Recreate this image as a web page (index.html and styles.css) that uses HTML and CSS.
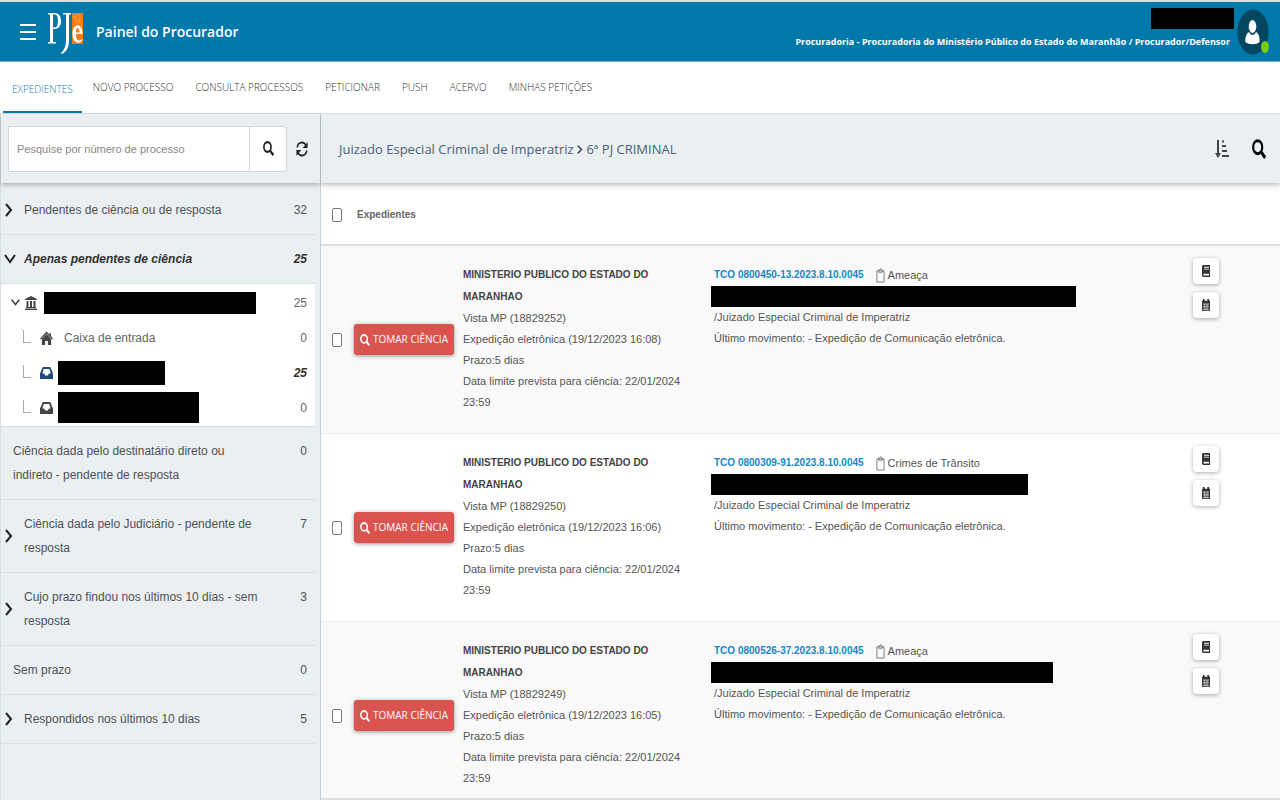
FILE: index.html
```html
<!DOCTYPE html>
<html lang="pt-BR">
<head>
<meta charset="utf-8">
<title>Painel do Procurador</title>
<link rel="stylesheet" href="styles.css">
</head>
<body>
<svg class="defs" aria-hidden="true">
  <symbol id="search" viewBox="0 0 16 16" preserveAspectRatio="none"><circle cx="6.500" cy="6.500" r="5.200" fill="none" stroke="currentColor" stroke-width="2.400"/><path d="M10 10l5 5" stroke="currentColor" stroke-width="3"/></symbol>
  <symbol id="right" viewBox="0 0 8 14" preserveAspectRatio="none"><path d="M1 1l5 6-5 6" fill="none" stroke="currentColor" stroke-width="2"/></symbol>
  <symbol id="down" viewBox="0 0 12 10" preserveAspectRatio="none"><path d="M1 1l5 7 5-7" fill="none" stroke="currentColor" stroke-width="2"/></symbol>
  <symbol id="inbox" viewBox="0 0 14 14" preserveAspectRatio="none"><path fill="currentColor" fill-rule="evenodd" d="M3 1h8l3 6.500V13H0V7.500zM4 3L2.500 7.500h2L5.500 9.500h3l1-2h2L10 3z"/></symbol>
  <symbol id="clip" viewBox="0 0 10 16" preserveAspectRatio="none"><path d="M1 3h8v12H1z" fill="none" stroke="currentColor"/><path d="M3 2h1l1-1.500L6 2h1v2.500H3z" fill="none" stroke="currentColor"/></symbol>
  <symbol id="book" viewBox="0 0 8 13" preserveAspectRatio="none"><path fill="currentColor" fill-rule="evenodd" d="M1 0h7v13H1L0 12V1zM2 2v1h5V2zM2 4v1h5V4zM1.500 9.500v2H7v-2z"/></symbol>
  <symbol id="cal" viewBox="0 0 9 13" preserveAspectRatio="none"><path fill="currentColor" d="M1 0h2v2h3V0h2v2h1v11H0V2h1z"/><path d="M1 5.500h7M1 8.500h7M1 11.500h7M2.500 5v7.500M4.500 5v7.500M6.500 5v7.500" stroke="#fff" stroke-width=".6"/></symbol>
</svg>
<header class="topbar">
  <button class="menu" aria-label="Menu"><span></span><span></span><span></span></button>
  <svg class="logo" viewBox="0 0 35 42" role="img" aria-label="PJe">
    <rect x="24" y="1" width="11" height="31" fill="#f57c13"/>
    <path d="M25 5h3V3h4v6h-5M28 5v6h6" fill="none" stroke="#ffae61" stroke-width=".6"/>
    <path d="M0 1h7c8 0 8 16 0 16H5v13h3v1.500H0V30h2V2.500H0zM5 2.500v13h2c4 0 4-13 0-13zM15 1h8v1.500h-2V28c0 8-3 12-7 14l-1-1c3-3 5-6 5-13V2.500h-3z" fill="#fff" fill-rule="evenodd"/>
    <path d="M34.500 28c-3 5-10 3-10-6 0-11 10-12 10 0h-6.500c0 8 4 7 6.500 5zm-3-7.500c0-6-3.500-6-3.500 0z" fill="#fff" fill-rule="evenodd"/>
  </svg>
  <h1>Painel do Procurador</h1>
  <div class="user">
    <span class="redact name"></span>
    <span>Procuradoria - Procuradoria do Ministério Público do Estado do Maranhão / Procurador/Defensor</span>
  </div>
  <button class="avatar" aria-label="Usuário">
    <svg viewBox="0 0 32 46" preserveAspectRatio="none"><ellipse cx="16" cy="23" rx="15.500" ry="22.500" fill="#04465f"/><ellipse cx="15.500" cy="17.500" rx="3.800" ry="6.500" fill="#fff"/><path d="M12 23c2 4 5 4 7 0 3 2 4 6 3.500 10-3 3-11 3-14 0-.5-4 .5-8 3.500-10z" fill="#fff"/><ellipse cx="28" cy="38" rx="4" ry="6" fill="#78cd0a"/></svg>
  </button>
</header>
<nav class="tabs">
  <a href="#" class="active">EXPEDIENTES</a><a href="#">NOVO PROCESSO</a><a href="#">CONSULTA PROCESSOS</a><a href="#">PETICIONAR</a><a href="#">PUSH</a><a href="#">ACERVO</a><a href="#">MINHAS PETIÇÕES</a>
</nav>
<div class="layout">
  <aside>
    <form class="search">
      <input type="text" placeholder="Pesquise por número de processo" aria-label="Pesquise por número de processo">
      <button type="button" class="go" aria-label="Pesquisar"><svg class="i-search"><use href="#search"/></svg></button>
      <button type="button" class="refresh" aria-label="Atualizar"><svg viewBox="0 0 14 16" preserveAspectRatio="none"><path d="M1.500 6.500C2 1 9 0 11.500 4M12.500 9.500C12 15 5 16 2.500 12" fill="none" stroke="currentColor" stroke-width="1.800"/><path d="M13.500 1v6H8zM.5 15V9H6z" fill="currentColor"/></svg></button>
    </form>
    <ul class="groups">
      <li><a href="#"><svg class="i-right"><use href="#right"/></svg><span>Pendentes de ciência ou de resposta</span><b>32</b></a></li>
      <li class="open"><a href="#"><svg class="i-down"><use href="#down"/></svg><span>Apenas pendentes de ciência</span><b>25</b></a></li>
      <li class="tree">
        <ul>
          <li><svg class="i-small"><use href="#down"/></svg><svg class="bank" viewBox="0 0 12 14" preserveAspectRatio="none"><path fill="currentColor" d="M6 0l6 3v1H0V3zM1.500 5h2v6h-2zM5 5h2v6H5zM8.500 5h2v6h-2zM1 11h10v1H1zM0 12.500h12V14H0z"/></svg><span class="redact r1"></span><b>25</b></li>
          <li class="child"><i></i><svg class="tray" viewBox="0 0 14 14" preserveAspectRatio="none"><path fill="currentColor" d="M7 3l5 5v6H8.500v-4h-3v4H2V8z"/><path d="M.5 8L7 1.500 13.500 8M11 2v3" fill="none" stroke="currentColor" stroke-width="1.500"/></svg><a href="#">Caixa de entrada</a><b>0</b></li>
          <li class="child current"><i></i><svg class="tray"><use href="#inbox"/></svg><span class="redact r2"></span><b>25</b></li>
          <li class="child"><i></i><svg class="tray"><use href="#inbox"/></svg><span class="redact r3"></span><b>0</b></li>
        </ul>
      </li>
      <li class="plain"><a href="#"><span>Ciência dada pelo destinatário direto ou indireto - pendente de resposta</span><b>0</b></a></li>
      <li><a href="#"><svg class="i-right"><use href="#right"/></svg><span>Ciência dada pelo Judiciário - pendente de resposta</span><b>7</b></a></li>
      <li><a href="#"><svg class="i-right"><use href="#right"/></svg><span>Cujo prazo findou nos últimos 10 dias - sem resposta</span><b>3</b></a></li>
      <li class="plain"><a href="#"><span>Sem prazo</span><b>0</b></a></li>
      <li><a href="#"><svg class="i-right"><use href="#right"/></svg><span>Respondidos nos últimos 10 dias</span><b>5</b></a></li>
    </ul>
  </aside>
  <main>
    <div class="crumbs">
      <h2>Juizado Especial Criminal de Imperatriz <svg><use href="#right"/></svg> 6ª PJ CRIMINAL</h2>
      <button aria-label="Ordenar"><svg class="sort" viewBox="0 0 14 18" preserveAspectRatio="none"><path d="M3 0v15M7 1.500h2M7 6h4M7 11h5M7 16h7" fill="none" stroke="#444" stroke-width="2"/><path d="M0 13h6l-3 5z" fill="#444"/></svg></button>
      <button aria-label="Pesquisar"><svg class="find"><use href="#search"/></svg></button>
    </div>
    <table>
      <colgroup><col class="w-check"><col class="w-action"><col class="w-who"><col><col class="w-tools"></colgroup>
      <thead><tr><th class="check"><input type="checkbox" id="all"></th><th colspan="4"><label for="all">Expedientes</label></th></tr></thead>
      <tbody>
        <tr>
          <td class="check"><input type="checkbox" aria-label="Selecionar 18829252"></td>
          <td class="action"><button class="take"><svg><use href="#search"/></svg>TOMAR CIÊNCIA</button></td>
          <td class="who"><strong>MINISTERIO PUBLICO DO ESTADO DO MARANHAO</strong><div>Vista MP (18829252)</div><div>Expedição eletrônica (19/12/2023 16:08)</div><div>Prazo:5 dias</div><div>Data limite prevista para ciência: 22/01/2024 23:59</div></td>
          <td class="case"><div class="head"><a href="#">TCO 0800450-13.2023.8.10.0045</a><svg><use href="#clip"/></svg>Ameaça</div><span class="redact c1"></span><div>/Juizado Especial Criminal de Imperatriz</div><div>Último movimento: - Expedição de Comunicação eletrônica.</div></td>
          <td class="tools"><button aria-label="Autos"><svg><use href="#book"/></svg></button><button aria-label="Prazo"><svg><use href="#cal"/></svg></button></td>
        </tr>
        <tr>
          <td class="check"><input type="checkbox" aria-label="Selecionar 18829250"></td>
          <td class="action"><button class="take"><svg><use href="#search"/></svg>TOMAR CIÊNCIA</button></td>
          <td class="who"><strong>MINISTERIO PUBLICO DO ESTADO DO MARANHAO</strong><div>Vista MP (18829250)</div><div>Expedição eletrônica (19/12/2023 16:06)</div><div>Prazo:5 dias</div><div>Data limite prevista para ciência: 22/01/2024 23:59</div></td>
          <td class="case"><div class="head"><a href="#">TCO 0800309-91.2023.8.10.0045</a><svg><use href="#clip"/></svg>Crimes de Trânsito</div><span class="redact c2"></span><div>/Juizado Especial Criminal de Imperatriz</div><div>Último movimento: - Expedição de Comunicação eletrônica.</div></td>
          <td class="tools"><button aria-label="Autos"><svg><use href="#book"/></svg></button><button aria-label="Prazo"><svg><use href="#cal"/></svg></button></td>
        </tr>
        <tr>
          <td class="check"><input type="checkbox" aria-label="Selecionar 18829249"></td>
          <td class="action"><button class="take"><svg><use href="#search"/></svg>TOMAR CIÊNCIA</button></td>
          <td class="who"><strong>MINISTERIO PUBLICO DO ESTADO DO MARANHAO</strong><div>Vista MP (18829249)</div><div>Expedição eletrônica (19/12/2023 16:05)</div><div>Prazo:5 dias</div><div>Data limite prevista para ciência: 22/01/2024 23:59</div></td>
          <td class="case"><div class="head"><a href="#">TCO 0800526-37.2023.8.10.0045</a><svg><use href="#clip"/></svg>Ameaça</div><span class="redact c3"></span><div>/Juizado Especial Criminal de Imperatriz</div><div>Último movimento: - Expedição de Comunicação eletrônica.</div></td>
          <td class="tools"><button aria-label="Autos"><svg><use href="#book"/></svg></button><button aria-label="Prazo"><svg><use href="#cal"/></svg></button></td>
        </tr>
      </tbody>
    </table>
  </main>
</div>
</body>
</html>
```
FILE: styles.css
```css
* { box-sizing: border-box; }
body { margin: 0; height: 100vh; display: flex; flex-direction: column; overflow: hidden; border-top: 2px solid #dce0e2; color: #555; background: #fff; font-family: "Liberation Sans", Arial, sans-serif; font-size: 11px; }
button { padding: 0; border: 0; background: none; color: inherit; font: inherit; cursor: pointer; }
a { color: inherit; text-decoration: none; }
ul { margin: 0; padding: 0; list-style: none; }
svg { flex: none; display: block; }
.defs { position: absolute; width: 0; height: 0; }
.redact { display: block; background: #000; }

.topbar { flex: none; height: 60px; display: flex; align-items: center; padding: 0 11px 0 20px; background: #0078aa; border-bottom: 1px solid #7da7c6; color: #fff; font-family: "Open Sans", sans-serif; }
.menu { width: 16px; display: grid; gap: 5px; }
.menu span { height: 2px; background: #fff; }
.logo { width: 35px; height: 42px; margin: 2px 13px 0 12px; }
h1 { margin: 0; font-size: 14px; font-weight: 600; }
.user { flex: 1; display: flex; flex-direction: column; align-items: flex-end; gap: 3px; padding-bottom: 3px; font-size: 9px; font-weight: 700; line-height: 20px; white-space: nowrap; }
.name { width: 83px; height: 21px; margin-right: -4px; }
.avatar { width: 32px; height: 46px; margin-left: 7px; padding-bottom: 2px; }
.avatar svg { width: 32px; height: 46px; }

.tabs { flex: none; height: 52px; display: flex; padding-left: 3px; border-bottom: 1px solid #dcdfe0; font-family: "Open Sans", sans-serif; font-size: 10px; font-weight: 300; color: #333; line-height: 50px; white-space: nowrap; }
.tabs a { padding: 0 11px; }
.tabs .active { padding: 2px 9px 0; color: #1b7fb1; border-bottom: 2px solid #0f7aa6; }

.layout { flex: 1; min-height: 0; display: flex; }
aside { width: 321px; flex: none; background: #eaeff2; border-left: 1px solid #d2dde4; border-right: 1px solid #c2d1da; }
.search { height: 69px; display: flex; align-items: center; padding: 0 12px 0 7px; box-shadow: 0 2px 5px #0004; }
.search input { flex: 1; min-width: 0; height: 46px; padding: 0 8px; border: 1px solid #d4d7d9; border-right: 0; font: inherit; }
.search input::placeholder { color: #888; opacity: 1; }
.go { width: 38px; height: 46px; display: grid; place-items: center; background: #fff; border: 1px solid #d4d7d9; border-radius: 0 3px 3px 0; color: #222; }
.i-search { width: 11px; height: 15px; }
.refresh { width: 12px; margin-left: 9px; color: #222; }
.refresh svg { width: 12px; height: 16px; }

.groups { padding: 3px 5px 0 0; font-size: 12px; color: #4f5254; }
.groups > li { border-bottom: 1px solid #dadfe2; }
.groups > li > a { display: flex; align-items: center; padding: 12px 8px 12px 4px; line-height: 24px; }
.groups > .plain > a { padding-left: 12px; }
.groups a span { flex: 1; padding-right: 38px; }
.groups b { margin-left: auto; align-self: flex-start; font-weight: 400; }
.i-right { width: 8px; height: 14px; margin-right: 11px; color: #222; }
.i-down { width: 12px; height: 10px; margin-right: 8px; margin-left: -1px; color: #222; }
.open { font-weight: 700; font-style: italic; color: #333; }
.groups .open b, .groups .current b { font-weight: 700; font-style: italic; color: #333; }
.tree { padding: 1px 0; background: #fff; color: #666; }
.tree li { height: 35px; display: flex; align-items: center; padding: 0 8px 0 10px; }
.groups .tree b { align-self: center; }
.i-small { width: 9px; height: 7px; margin-right: 5px; color: #333; }
.bank { width: 12px; height: 14px; margin-right: 7px; color: #444; }
.tree .child { padding-left: 22px; }
.child i { width: 8px; height: 13px; margin: 0 9px 3px 0; border-left: 1px solid #aaa; border-bottom: 1px solid #aaa; }
.tray { width: 13px; height: 14px; margin-right: 5px; color: #444; }
.current .tray { color: #1f4b7b; }
.child a { padding-left: 6px; }
.r1 { width: 212px; height: 22px; }
.r2 { width: 107px; height: 24px; }
.r3 { width: 141px; height: 31px; }

main { flex: 1; min-width: 0; overflow: hidden; border-bottom: 2px solid #dedede; }
.crumbs { height: 69px; display: flex; align-items: center; gap: 23px; padding: 0 14px 0 18px; background: #eaeff2; box-shadow: 0 2px 5px #0004; }
.crumbs h2 { flex: 1; margin: 0; font-family: "Open Sans", sans-serif; font-size: 13px; font-weight: 400; color: #4d5f72; }
.crumbs h2 svg { display: inline; width: 6px; height: 9px; color: #26394d; }
.sort { width: 14px; height: 18px; }
.find { width: 14px; height: 20px; color: #000; }

table { width: 100%; border-collapse: separate; border-spacing: 0; table-layout: fixed; }
.w-check { width: 33px; }
.w-action { width: 109px; }
.w-who { width: 251px; }
.w-tools { width: 87px; }
th { height: 63px; padding: 2px 0 0; text-align: left; font-size: 10px; font-weight: 700; color: #666; border-bottom: 2px solid #dedede; }
td { height: 188px; padding: 18px 0; vertical-align: top; line-height: 21px; border-bottom: 1px solid #eee; }
tbody tr:nth-child(odd) { background: #f9f9f9; }
.check { padding-left: 11px; vertical-align: middle; }
.check input { display: block; appearance: none; width: 10px; height: 14px; margin: 0; border: 1px solid #777; border-radius: 2px; background: #fff; }
.check input:checked { background: #0078aa; }
th label { padding-left: 3px; }
.action { vertical-align: middle; }
.take { width: 100px; height: 31px; display: flex; align-items: center; justify-content: center; gap: 3px; border-radius: 3px; background: #d9534f; color: #fff; box-shadow: 0 1px 4px #0006; font-family: "Open Sans", sans-serif; font-size: 10px; font-weight: 500; white-space: nowrap; }
.take svg { width: 10px; height: 12px; }
td.who { padding-right: 20px; }
.who strong { display: block; width: 210px; font-size: 10px; line-height: 22px; color: #444; }
.head { display: flex; align-items: center; line-height: 22px; }
.head a { font-size: 10px; font-weight: 700; color: #1588c4; }
.head svg { width: 9px; height: 15px; margin: 0 3px 0 12px; color: #777; }
.case .redact { max-width: 100%; height: 21px; margin-left: -3px; }
.c1 { width: 365px; }
.c2 { width: 317px; }
.c3 { width: 342px; }
td.tools { padding-top: 12px; }
.tools button { width: 26px; height: 26px; margin-bottom: 8px; display: grid; place-items: center; border-radius: 4px; background: #fff; color: #333; box-shadow: 0 1px 4px #0005; }
.tools svg { width: 8px; height: 12px; }
```
